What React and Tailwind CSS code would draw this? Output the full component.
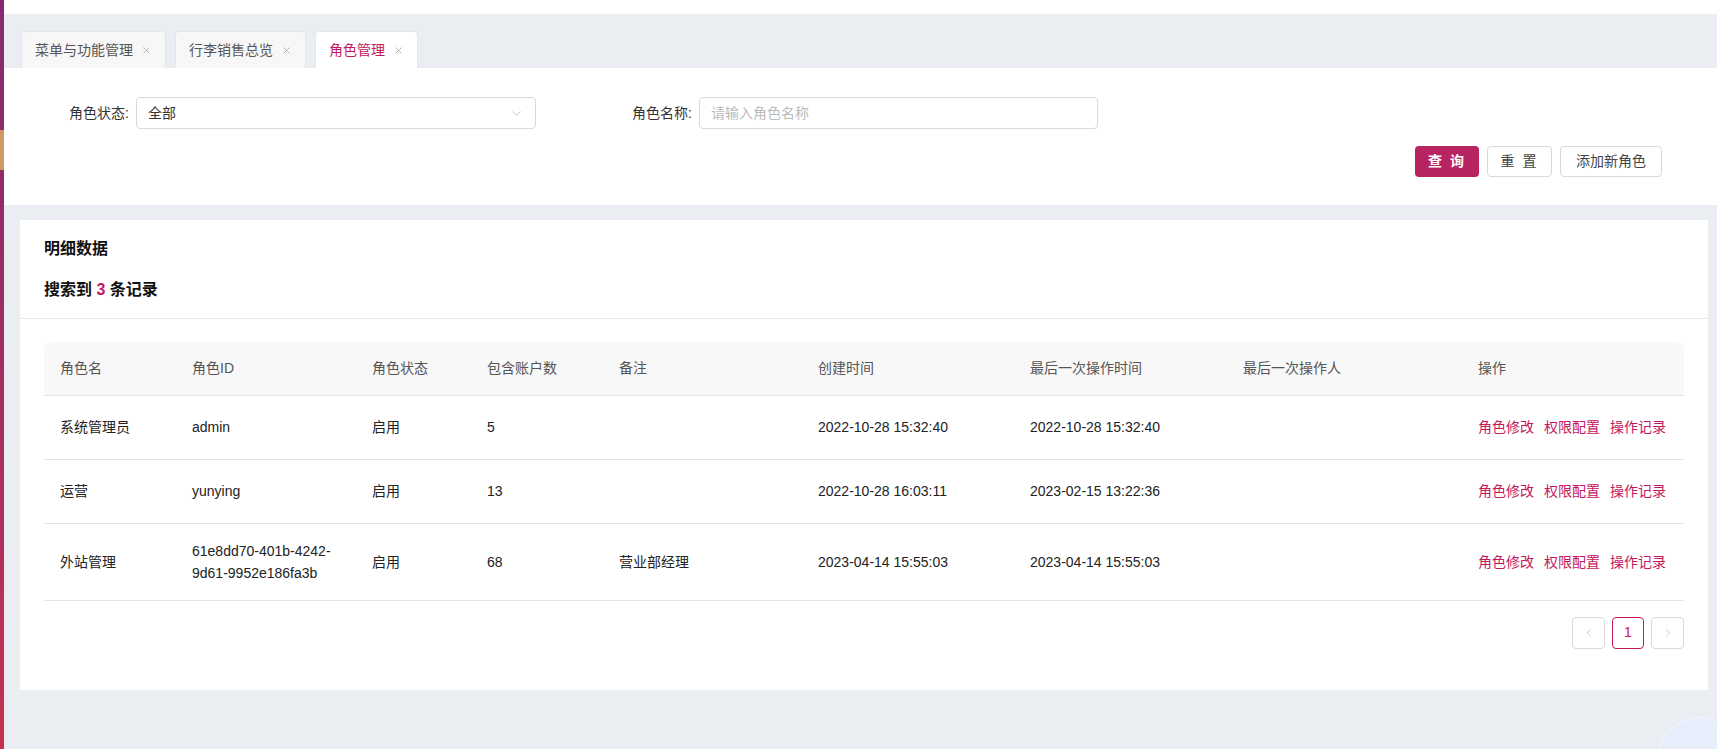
import { ChevronDown, ChevronLeft, ChevronRight, X } from "lucide-react";

const tabs = [
  { name: "菜单与功能管理", active: false },
  { name: "行李销售总览", active: false },
  { name: "角色管理", active: true },
];

const columns = [
  { title: "角色名", w: "w-[132px]" },
  { title: "角色ID", w: "w-[180px]" },
  { title: "角色状态", w: "w-[115px]" },
  { title: "包含账户数", w: "w-[132px]" },
  { title: "备注", w: "w-[199px]" },
  { title: "创建时间", w: "w-[212px]" },
  { title: "最后一次操作时间", w: "w-[213px]" },
  { title: "最后一次操作人", w: "w-[235px]" },
  { title: "操作", w: "" },
];

const rows = [
  {
    name: "系统管理员",
    id: "admin",
    status: "启用",
    count: "5",
    note: "",
    created: "2022-10-28 15:32:40",
    updated: "2022-10-28 15:32:40",
  },
  {
    name: "运营",
    id: "yunying",
    status: "启用",
    count: "13",
    note: "",
    created: "2022-10-28 16:03:11",
    updated: "2023-02-15 13:22:36",
  },
  {
    name: "外站管理",
    id: "61e8dd70-401b-4242-9d61-9952e186fa3b",
    status: "启用",
    count: "68",
    note: "营业部经理",
    created: "2023-04-14 15:55:03",
    updated: "2023-04-14 15:55:03",
  },
];

function Tab({ name, active }) {
  return (
    <div
      className={
        "h-[37px] flex items-center gap-[8px] px-[13px] rounded-t-[4px] border border-b-0 border-[#e6e6e6] text-[14px] " +
        (active ? "bg-white text-[#c3185d]" : "bg-[#f7f7f7] text-[#555]")
      }
    >
      <span>{name}</span>
      <X size={11} strokeWidth={1.5} className="text-[#999]" />
    </div>
  );
}

const td = "px-[16px] py-[16px] leading-[22px]";

export default function App() {
  return (
    <div className="flex min-h-screen font-['Liberation_Sans','Noto_Sans_CJK_SC',sans-serif] text-[#222]">
      {/* sidebar edge */}
      <div className="w-[4px] flex flex-col shrink-0">
        <div className="h-[130px] bg-gradient-to-b from-[#842a73] to-[#8f2b6c]" />
        <div className="h-[40px] bg-[#cf9966]" />
        <div className="flex-1 bg-gradient-to-b from-[#902b6b] to-[#c53150]" />
      </div>

      <div className="flex-1 bg-[#eaedf1] flex flex-col">
        <div className="h-[14px] bg-white" />

        {/* tabs */}
        <div className="flex gap-[9px] pt-[17px] px-[17px]">
          {tabs.map((t) => (
            <Tab key={t.name} {...t} />
          ))}
        </div>

        {/* filter panel */}
        <div className="bg-white pt-[29px] pb-[28px] pr-[55px]">
          <div className="flex items-center text-[14px]">
            <label className="w-[125px] text-right text-[#333] whitespace-nowrap">角色状态:</label>
            <div className="ml-[7px] w-[400px] h-[32px] border border-[#d9d9d9] rounded-[4px] flex items-center justify-between px-[11px]">
              <span className="text-[#333]">全部</span>
              <ChevronDown size={15} strokeWidth={1} className="text-[#aaa]" />
            </div>
            <label className="w-[156px] text-right text-[#333] whitespace-nowrap">角色名称:</label>
            <div className="ml-[7px] w-[399px] h-[32px] border border-[#d9d9d9] rounded-[4px] flex items-center px-[11px]">
              <span className="text-[#bbb]">请输入角色名称</span>
            </div>
          </div>
          <div className="flex justify-end gap-[8px] mt-[17px] text-[14px]">
            <button className="w-[64px] h-[31px] rounded-[4px] bg-[#b82361] text-white font-bold tracking-[2px]">
              查 询
            </button>
            <button className="w-[65px] h-[31px] rounded-[4px] border border-[#d9d9d9] bg-white text-[#444] tracking-[2px]">
              重 置
            </button>
            <button className="w-[102px] h-[31px] rounded-[4px] border border-[#d9d9d9] bg-white text-[#444]">
              添加新角色
            </button>
          </div>
        </div>

        {/* detail card */}
        <div className="mt-[15px] ml-[16px] mr-[9px] bg-white rounded-[2px] pb-[41px]">
          <div className="px-[24px] pt-[17px] pb-[16px] border-b border-[#e6e6e6]">
            <div className="text-[16px] leading-[24px] font-bold text-[#111]">明细数据</div>
            <div className="mt-[17px] text-[16px] leading-[24px] font-bold text-[#111]">
              搜索到 <span className="text-[#c3185d]">3</span> 条记录
            </div>
          </div>

          <div className="px-[24px] pt-[23px]">
            <table className="w-full table-fixed border-collapse text-[14px]">
              <thead>
                <tr className="bg-[#f8f8f8]">
                  {columns.map((c, i) => (
                    <th
                      key={c.title}
                      className={
                        c.w +
                        " h-[53px] px-[16px] text-left font-normal text-[#555] border-b border-[#e4e4e4] " +
                        (i === 0 ? "rounded-tl-[6px]" : "") +
                        (i === columns.length - 1 ? "rounded-tr-[6px]" : "")
                      }
                    >
                      {c.title}
                    </th>
                  ))}
                </tr>
              </thead>
              <tbody>
                {rows.map((r) => (
                  <tr key={r.id} className="border-b border-[#e4e4e4]">
                    <td className={td + " h-[64px]"}>{r.name}</td>
                    <td className={td + " break-words"}>{r.id}</td>
                    <td className={td}>{r.status}</td>
                    <td className={td}>{r.count}</td>
                    <td className={td}>{r.note}</td>
                    <td className={td}>{r.created}</td>
                    <td className={td}>{r.updated}</td>
                    <td className={td}></td>
                    <td className={td + " text-[#c3185d] whitespace-nowrap"}>
                      <span className="flex gap-[10px]">
                        <a>角色修改</a>
                        <a>权限配置</a>
                        <a>操作记录</a>
                      </span>
                    </td>
                  </tr>
                ))}
              </tbody>
            </table>

            <div className="flex justify-end gap-[7px] mt-[16px]">
              <div className="w-[33px] h-[32px] border border-[#d9d9d9] rounded-[4px] flex items-center justify-center">
                <ChevronLeft size={14} strokeWidth={1.2} className="text-[#bbb]" />
              </div>
              <div className="w-[32px] h-[32px] border border-[#c3185d] rounded-[4px] flex items-center justify-center text-[14px] text-[#c3185d]">
                1
              </div>
              <div className="w-[33px] h-[32px] border border-[#d9d9d9] rounded-[4px] flex items-center justify-center">
                <ChevronRight size={14} strokeWidth={1.2} className="text-[#bbb]" />
              </div>
            </div>
          </div>
        </div>
        <div className="flex-1" />
      </div>

      {/* floating helper bubble peeking at bottom-right */}
      <div className="fixed right-[-26px] bottom-[-54px] w-[86px] h-[86px] rounded-full bg-[#e6eefb] border border-[#f2f6fd]" />
    </div>
  );
}
